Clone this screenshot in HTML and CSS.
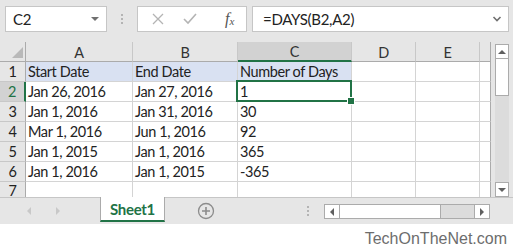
FILE: index.html
```html
<!DOCTYPE html>
<html lang="en">
<head>
    <meta charset="UTF-8">
    <title>DAYS function</title>
    <link rel="stylesheet" href="styles.css">
</head>
<body>
    <div class="window">
        <div class="formula-bar">
            <div class="name-box">
                <span>C2</span>
                <span class="drop-tri"></span>
            </div>
            <div class="grip"><i></i><i></i><i></i></div>
            <div class="fn-box">
                <svg width="14" height="14" viewBox="0 0 14 14"><path d="M2 2 L12 12 M12 2 L2 12" stroke="#b4b4b4" stroke-width="1.3" fill="none"/></svg>
                <svg width="16" height="14" viewBox="0 0 16 14"><path d="M2 7 L6 11 L14 2" stroke="#b4b4b4" stroke-width="1.6" fill="none"/></svg>
                <span class="fx">f<sub>x</sub></span>
            </div>
            <div class="formula-input">
                <span>=DAYS(B2,A2)</span>
                <svg width="10" height="8" viewBox="0 0 10 8"><path d="M1.5 2 L5 5.5 L8.5 2" stroke="#707070" stroke-width="1.6" fill="none"/></svg>
            </div>
        </div>

        <div class="sheet-area">
            <div class="grid">
                <div class="hd corner"><span class="corner-tri"></span></div>
                <div class="hd">A</div>
                <div class="hd">B</div>
                <div class="hd hd-sel">C</div>
                <div class="hd">D</div>
                <div class="hd">E</div>
                <div class="hd hd-end"></div>

                <div class="rh">1</div>
                <div class="c band">Start Date</div>
                <div class="c band">End Date</div>
                <div class="c band">Number of Days</div>
                <div class="c"></div>
                <div class="c"></div>
                <div class="c c-end"></div>

                <div class="rh rh-sel">2</div>
                <div class="c">Jan 26, 2016</div>
                <div class="c">Jan 27, 2016</div>
                <div class="c active">1</div>
                <div class="c"></div>
                <div class="c"></div>
                <div class="c c-end"></div>

                <div class="rh">3</div>
                <div class="c">Jan 1, 2016</div>
                <div class="c">Jan 31, 2016</div>
                <div class="c">30</div>
                <div class="c"></div>
                <div class="c"></div>
                <div class="c c-end"></div>

                <div class="rh">4</div>
                <div class="c">Mar 1, 2016</div>
                <div class="c">Jun 1, 2016</div>
                <div class="c">92</div>
                <div class="c"></div>
                <div class="c"></div>
                <div class="c c-end"></div>

                <div class="rh">5</div>
                <div class="c">Jan 1, 2015</div>
                <div class="c">Jan 1, 2016</div>
                <div class="c">365</div>
                <div class="c"></div>
                <div class="c"></div>
                <div class="c c-end"></div>

                <div class="rh">6</div>
                <div class="c">Jan 1, 2016</div>
                <div class="c">Jan 1, 2015</div>
                <div class="c">-365</div>
                <div class="c"></div>
                <div class="c"></div>
                <div class="c c-end"></div>

                <div class="rh rh-cut">7</div>
                <div class="c"></div>
                <div class="c"></div>
                <div class="c"></div>
                <div class="c"></div>
                <div class="c"></div>
                <div class="c c-end"></div>
            </div>

            <div class="vscroll">
                <div class="sb-btn"><span class="tri tri-up"></span></div>
                <div class="vthumb"></div>
                <div class="vtrack"></div>
                <div class="sb-btn"><span class="tri tri-down"></span></div>
            </div>
        </div>

        <div class="tab-bar">
            <div class="tab-nav">
                <span class="tri tri-left light"></span>
                <span class="tri tri-right light"></span>
            </div>
            <div class="tab">Sheet1</div>
            <div class="add-sheet">
                <svg width="18" height="18" viewBox="0 0 18 18"><circle cx="9" cy="9" r="7.5" stroke="#8c8c8c" stroke-width="1.3" fill="none"/><path d="M9 5 V13 M5 9 H13" stroke="#8c8c8c" stroke-width="1.6"/></svg>
            </div>
            <div class="grip grip-h"><i></i><i></i><i></i></div>
            <div class="hscroll">
                <div class="sb-btn"><span class="tri tri-left"></span></div>
                <div class="hthumb"></div>
                <div class="htrack"></div>
                <div class="sb-btn"><span class="tri tri-right"></span></div>
            </div>
        </div>
    </div>

    <div class="credit">TechOnTheNet.com</div>
</body>
</html>
```

FILE: styles.css
```css
* {
    margin: 0;
    padding: 0;
    box-sizing: border-box;
}

body {
    width: 513px;
    height: 250px;
    overflow: hidden;
    background: #fff;
    font-family: Lato, 'Open Sans', sans-serif;
    color: #222;
}

.window {
    background: #e6e6e6;
}

/* formula bar */
.formula-bar {
    height: 42px;
    padding-top: 6px;
    display: flex;
    align-items: flex-start;
}

.name-box {
    margin-left: 5px;
    width: 102px;
    height: 26px;
    background: #fff;
    border: 1px solid #c6c6c6;
    display: flex;
    align-items: center;
    justify-content: space-between;
    padding: 0 7px 0 7px;
    font-size: 15px;
    letter-spacing: -0.3px;
}

.drop-tri {
    width: 0;
    height: 0;
    border-left: 4px solid transparent;
    border-right: 4px solid transparent;
    border-top: 4px solid #707070;
}

.grip {
    width: 30px;
    height: 26px;
    display: flex;
    flex-direction: column;
    align-items: center;
    justify-content: center;
    gap: 2px;
}

.grip i {
    width: 2px;
    height: 2px;
    background: #b4b4b4;
}

.fn-box {
    width: 110px;
    height: 26px;
    background: #fff;
    border: 1px solid #c6c6c6;
    display: flex;
    align-items: center;
    padding-left: 13px;
    gap: 17px;
}

.fx {
    font-family: 'Liberation Serif', serif;
    font-style: italic;
    font-size: 16px;
    color: #555;
    margin-left: 10px;
}

.fx sub {
    font-size: 11px;
    vertical-align: -1px;
}

.formula-input {
    margin-left: 5px;
    width: 257px;
    height: 26px;
    background: #fff;
    border: 1px solid #c6c6c6;
    display: flex;
    align-items: center;
    justify-content: space-between;
    padding: 0 6px 0 10px;
    font-size: 15px;
    letter-spacing: -0.3px;
}

/* sheet grid */
.sheet-area {
    height: 155px;
    display: flex;
    align-items: flex-start;
}

.grid {
    width: 491px;
    height: 155px;
    overflow: hidden;
    display: grid;
    grid-template-columns: 26px 107px 105px 114px 64px 64px 11px;
    grid-auto-rows: 20px;
    background: #fff;
    font-size: 14.5px;
    letter-spacing: -0.4px;
}

.hd {
    background: #e6e6e6;
    border-right: 1px solid #c8c8c8;
    border-bottom: 1px solid #ababab;
    display: flex;
    align-items: center;
    justify-content: center;
    color: #333;
    padding-top: 1px;
}

.hd-sel {
    background: #d2d2d2;
    border-bottom: 2px solid #217346;
}

.hd-end {
    border-right: 1px solid #ababab;
}

.corner {
    position: relative;
    border-right: 1px solid #ababab;
}

.corner-tri {
    position: absolute;
    right: 2px;
    bottom: 3px;
    width: 0;
    height: 0;
    border-left: 11px solid transparent;
    border-bottom: 11px solid #b9b9b9;
}

.rh {
    background: #e6e6e6;
    border-right: 1px solid #ababab;
    border-bottom: 1px solid #c8c8c8;
    display: flex;
    align-items: center;
    justify-content: center;
    color: #222;
}

.rh-cut {
    align-items: flex-start;
    padding-top: 1px;
    line-height: 16px;
}

.rh-sel {
    background: #d2d2d2;
    color: #217346;
    border-right: 2px solid #217346;
}

.c {
    border-right: 1px solid #d4d4d4;
    border-bottom: 1px solid #d4d4d4;
    padding-left: 2px;
    display: flex;
    align-items: center;
    white-space: nowrap;
}

.c-end {
    border-right: 1px solid #ababab;
}

.band {
    background: #d9e1f2;
}

.active {
    position: relative;
}

.active::before {
    content: "";
    position: absolute;
    top: -2px;
    left: -2px;
    right: -1px;
    bottom: -1px;
    border: 2px solid #217346;
}

.active::after {
    content: "";
    position: absolute;
    right: -4px;
    bottom: -4px;
    width: 6px;
    height: 6px;
    background: #217346;
    border: 1px solid #fff;
}

/* scrollbars */
.vscroll {
    margin: 2px 0 0 4px;
    width: 14px;
    height: 153px;
    display: flex;
    flex-direction: column;
}

.sb-btn {
    width: 14px;
    height: 15px;
    background: #fff;
    border: 1px solid #ababab;
    display: flex;
    align-items: center;
    justify-content: center;
}

.vthumb {
    height: 37px;
    background: #fff;
    border: 1px solid #ababab;
    border-top: none;
}

.vtrack {
    flex: 1;
    background: #dcdcdc;
}

.tri {
    width: 0;
    height: 0;
}

.tri-up {
    border-left: 4px solid transparent;
    border-right: 4px solid transparent;
    border-bottom: 4px solid #606060;
}

.tri-down {
    border-left: 4px solid transparent;
    border-right: 4px solid transparent;
    border-top: 4px solid #606060;
}

.tri-left {
    border-top: 4px solid transparent;
    border-bottom: 4px solid transparent;
    border-right: 4px solid #606060;
}

.tri-right {
    border-top: 4px solid transparent;
    border-bottom: 4px solid transparent;
    border-left: 4px solid #606060;
}

.tri.light {
    border-right-color: #c8c8c8;
    border-left-color: #c8c8c8;
}

.tri-left.light {
    border-left-color: transparent;
}

.tri-right.light {
    border-right-color: transparent;
}

/* sheet tabs */
.tab-bar {
    height: 27px;
    border-top: 1px solid #c6c6c6;
    display: flex;
    align-items: flex-start;
}

.tab-nav {
    width: 100px;
    height: 26px;
    display: flex;
    align-items: center;
    padding-left: 27px;
    gap: 25px;
}

.tab {
    width: 65px;
    height: 25px;
    margin-top: -1px;
    background: #fff;
    border-left: 1px solid #ababab;
    border-right: 1px solid #ababab;
    border-bottom: 2px solid #217346;
    display: flex;
    align-items: center;
    justify-content: center;
    font-weight: bold;
    font-size: 15px;
    letter-spacing: -0.3px;
    color: #217346;
}

.add-sheet {
    width: 83px;
    height: 26px;
    display: flex;
    align-items: center;
    padding-left: 32px;
}

.grip-h {
    width: 16px;
    height: 26px;
    margin-left: 52px;
}

.hscroll {
    margin: 6px 0 0 8px;
    width: 166px;
    height: 15px;
    display: flex;
    border: 1px solid #ababab;
}

.hscroll .sb-btn {
    width: 14px;
    height: 13px;
    border: none;
}

.hthumb {
    width: 102px;
    background: #fff;
    border-left: 1px solid #ababab;
    border-right: 1px solid #ababab;
}

.htrack {
    flex: 1;
    background: #dcdcdc;
    border-right: 1px solid #ababab;
}

.credit {
    text-align: right;
    padding: 6px 6px 0 0;
    font-family: 'Liberation Sans', Arial, sans-serif;
    font-size: 16px;
    color: #6d6d6d;
}
```
